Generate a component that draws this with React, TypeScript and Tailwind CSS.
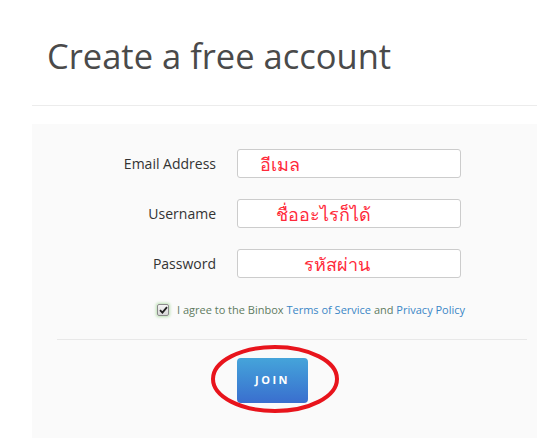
import React from "react";

const fields = [
  { label: "Email Address", hint: "อีเมล", pad: "pl-[22px]" },
  { label: "Username", hint: "ชื่ออะไรก็ได้", pad: "pl-[38px]" },
  { label: "Password", hint: "รหัสผ่าน", pad: "pl-[66px]" },
];

export default function App() {
  return (
    <div className="relative w-[537px] h-[438px] overflow-hidden bg-white font-['Open_Sans',sans-serif]">
      <h1 className="mt-[31px] pl-[47px] text-[34.5px] leading-[49px] font-normal text-[#4a4a4a]">
        Create a free account
      </h1>

      <div className="ml-[32px] mt-[25px] border-t border-[#ececec]" />

      {/* form panel */}
      <div className="ml-[32px] mt-[18px] h-[315px] bg-[#fafafa] pt-[25px]">
        <div className="flex flex-col gap-[21px]">
          {fields.map((f) => (
            <div key={f.label} className="flex items-center">
              <label className="w-[184px] text-right text-[14px] text-[#333]">{f.label}</label>
              <div
                className={`relative ml-[21px] flex h-[29px] w-[224px] items-center rounded-[3px] border border-[#ccc] bg-white ${f.pad}`}
              >
                <span className="font-['Noto_Sans','DejaVu_Sans',sans-serif] text-[18px] font-light leading-none text-[#ff2a3a]">
                  {f.hint}
                </span>
              </div>
            </div>
          ))}
        </div>

        <div className="mt-[24px] flex items-center pl-[125px]">
          <span className="flex h-[12px] w-[12px] items-center justify-center rounded-[2px] border border-[#8a8a8a] bg-gradient-to-b from-[#f4f4f4] to-[#d8d8d8] shadow-[0_0_3px_1px_#b9e0b0]">
            <svg width="9" height="8" viewBox="0 0 9 8">
              <path d="M1 4.2 L3.4 6.6 L8 1.2" fill="none" stroke="#222" strokeWidth="1.8" />
            </svg>
          </span>
          <span className="ml-[8px] text-[11px] text-[#5f7a5f]">
            I agree to the Binbox <span className="text-[#3a86c6]">Terms of Service</span> and{" "}
            <span className="text-[#3a86c6]">Privacy Policy</span>
          </span>
        </div>

        <div className="ml-[25px] mr-[10px] mt-[20px] border-t border-[#e8e8e8]" />

        <div className="mt-[18px] pl-[205px]">
          <button className="flex h-[45px] w-[71px] items-center justify-center rounded-[4px] bg-gradient-to-b from-[#45a4da] to-[#3a6ece] text-[11px] font-bold tracking-[2.5px] text-white">
            JOIN
          </button>
        </div>
      </div>

      {/* red annotation ring */}
      <svg className="absolute left-[209px] top-[344px]" width="132" height="70" viewBox="0 0 132 70">
        <ellipse cx="66" cy="35" rx="62" ry="32" fill="none" stroke="#e8141c" strokeWidth="4" />
      </svg>
    </div>
  );
}
